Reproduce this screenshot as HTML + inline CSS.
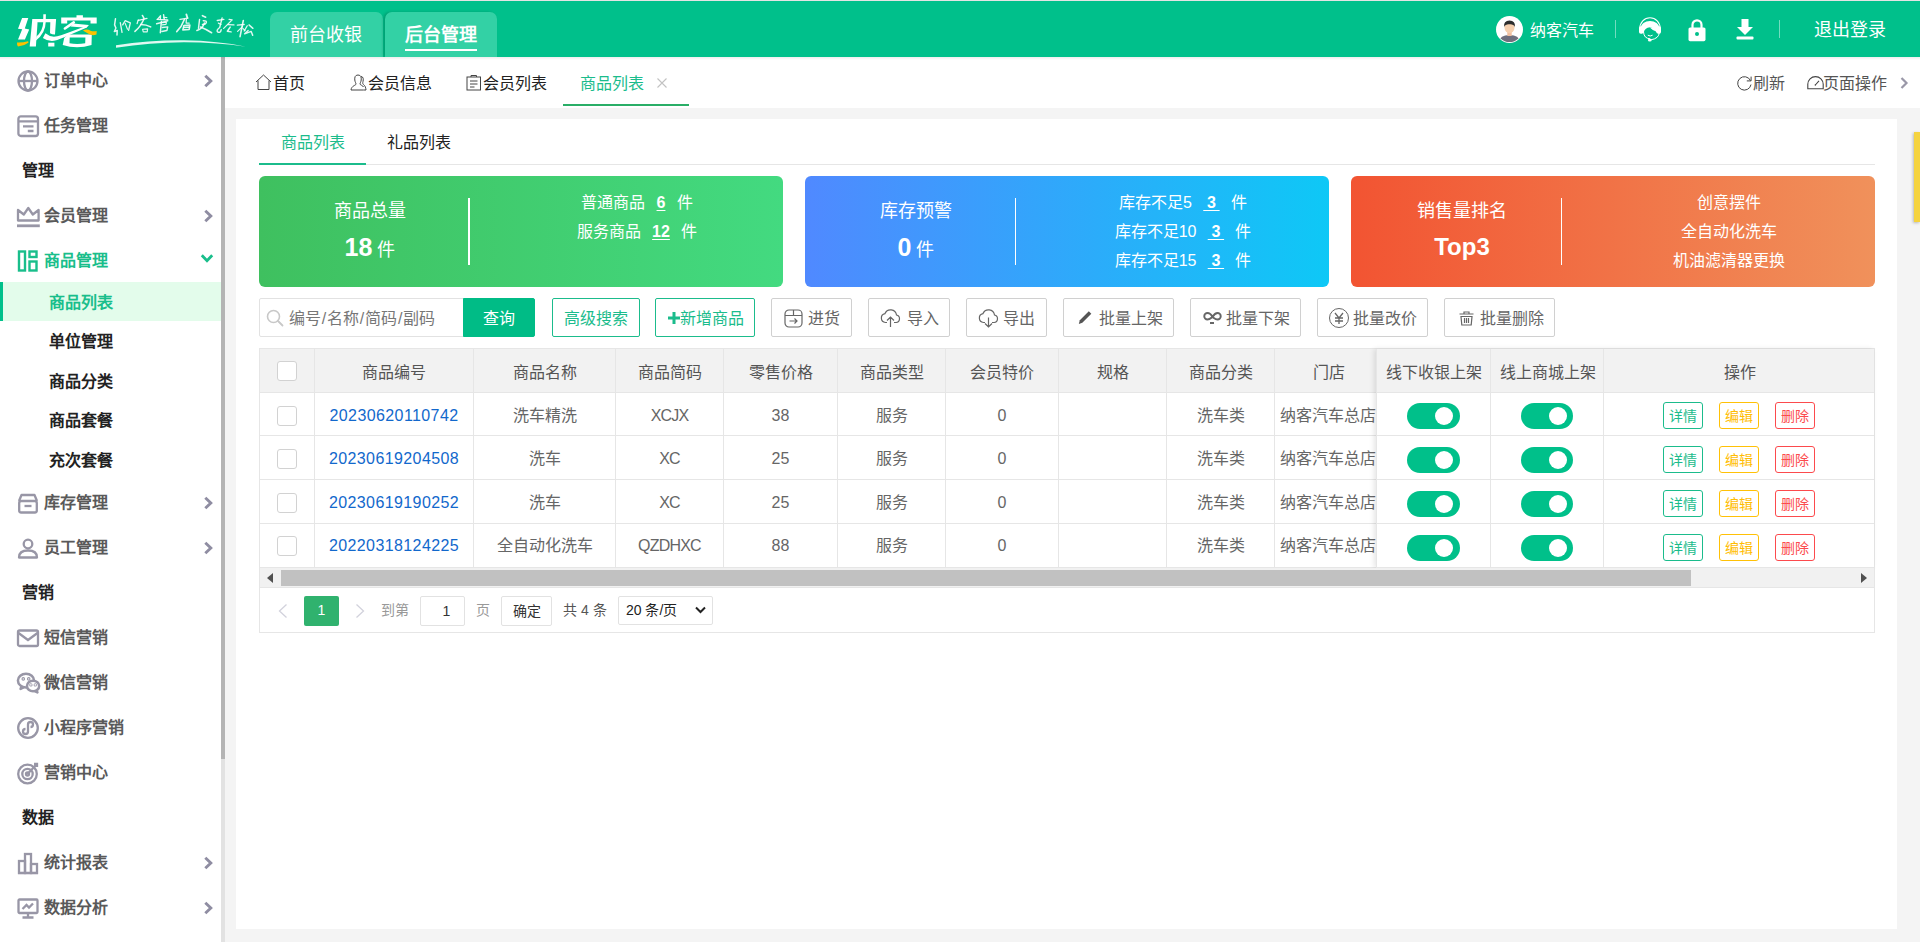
<!DOCTYPE html>
<html lang="zh-CN">
<head>
<meta charset="utf-8">
<title>商品列表</title>
<style>
*{box-sizing:border-box;margin:0;padding:0}
html,body{width:1920px;height:942px;overflow:hidden;background:#f4f4f4;font-family:"Liberation Sans",sans-serif;color:#333;font-size:16px}
.a{position:absolute;white-space:nowrap}
svg{position:absolute;overflow:visible}
/* header */
#hdr{position:absolute;left:0;top:0;width:1920px;height:57px;background:#00c08b;border-top:1px solid #e4e4e4}
.htab{position:absolute;top:12px;height:45px;background:#33d1a5;border-radius:7px 7px 0 0;color:#fff;font-size:18px;line-height:18px;text-align:center}
/* sidebar */
#side{position:absolute;left:0;top:57px;width:221px;height:885px;background:#fff}
#sbar{position:absolute;left:221px;top:57px;width:4px;height:885px;background:#e2e2e2}
#sbar i{position:absolute;left:0;top:0;width:4px;height:702px;background:#b4b4b4}
.nv{position:absolute;left:44px;font-size:16px;line-height:20px;font-weight:bold;color:#595959;white-space:nowrap}
.sec{position:absolute;left:22px;font-size:16px;line-height:20px;font-weight:bold;color:#222;white-space:nowrap}
.sub{position:absolute;left:49px;font-size:16px;line-height:20px;font-weight:bold;color:#222;white-space:nowrap}
.ic{left:17px;width:22px;height:22px;fill:none;stroke:#9896a6;stroke-width:2.300}
.chev{left:204px;width:9px;height:12px;fill:none;stroke:#8f8da2;stroke-width:2.9}
/* tab bar */
#tabs{position:absolute;left:225px;top:57px;width:1695px;height:51px;background:#fff}
.tb{position:absolute;top:74px;font-size:16px;line-height:20px;color:#222;white-space:nowrap}
.ti{fill:none;stroke:#444;stroke-width:1}
#card{position:absolute;left:236px;top:119px;width:1661px;height:810px;background:#fff}
/* stat cards */
.sc{position:absolute;top:176px;width:524px;height:111px;border-radius:6px;color:#fff}
.sc .t{position:absolute;left:0;width:222px;top:24px;text-align:center;font-size:18px;line-height:22px}
.sc .n{position:absolute;left:0;width:222px;top:55.500px;text-align:center;font-size:18px;line-height:30px}
.sc .n b{font-size:25px}
.sc .d{position:absolute;left:209px;top:22px;width:1px;height:67px;background:#fff}
.sc .r{position:absolute;left:232px;width:292px;text-align:center;font-size:16px;line-height:20px;white-space:nowrap;word-spacing:-.7px}
.sc .r u{font-weight:bold;text-underline-offset:2px}
/* toolbar */
.btn{position:absolute;top:298px;height:39px;border:1px solid #d0d0d0;border-radius:2px;background:#fff;color:#666;font-size:16px;line-height:20px}
.btn span{position:absolute;top:10px;white-space:nowrap}
.btn span i{font-style:normal;margin:0 .8px}
.gb{border-color:#1bbc8c;color:#1bbc8c}
.bi{fill:none;stroke:#666;stroke-width:1.2}
/* table */
#tbl{position:absolute;left:259px;top:348px;width:1616px;height:285px;border:1px solid #e6e6e6;background:#fff}
.hl{position:absolute;left:260px;width:1614px;height:1px;background:#e6e6e6}
.vl{position:absolute;top:349px;width:1px;height:219px;background:#e6e6e6}
.th{position:absolute;top:362.500px;font-size:16px;line-height:20px;color:#555;text-align:center;white-space:nowrap}
.td{position:absolute;font-size:16px;line-height:20px;color:#666;text-align:center;white-space:nowrap}
.lk{color:#1268cc;letter-spacing:.4px}
.cb{position:absolute;left:277px;width:20px;height:20px;border:1px solid #d2d2d2;border-radius:3px;background:#fff}
.sw{position:absolute;width:53px;height:26px;border-radius:13px;background:#00c08a}
.sw i{position:absolute;right:7px;top:4px;width:18px;height:18px;border-radius:9px;background:#fff}
.ob{position:absolute;width:40px;height:27px;border:1px solid;border-radius:3px;font-size:14px;line-height:27px;text-align:center;background:#fff}
.og{border-color:#1bbc8c;color:#1bbc8c}.oy{border-color:#ffc107;color:#ffbd05}.or{border-color:#fc4a4d;color:#fc4a4d}
</style>
</head>
<body>

<div id="hdr"></div>
<div class="a" style="left:17px;top:10px;font-size:33px;line-height:40px;font-weight:bold;color:transparent">纳客</div><div class="a" style="left:112px;top:15px;font-size:17px;line-height:24px;letter-spacing:3.400px;color:transparent">纳客营店更轻松</div>
<!-- logo -->
<svg id="logo" style="left:14px;top:10px;width:86px;height:40px" viewBox="14 10 86 40"><g fill="#fff">
<path d="M22.100 18.100 L28.300 18.100 L24.800 28.400 L29.200 29.400 L24.900 39.600 L18 39.600 L22.200 29.300 L18 28.800Z"/>
<path d="M32.300 19.100 L37.800 19.100 L35.900 46.500 L29.700 46.500Z"/>
<path d="M32.300 19.100 H56.100 L55 34.400 Q52 34.400 50 33.200 L50.300 22.300 H37.500Z"/>
<path d="M43.300 14.200 H45.900 L45.700 22.300 Q45.600 33 36 40.500 L36.200 36.800 Q43 31 43.200 22.300Z"/>
<path d="M45.400 33.200 Q49 36.300 54 36.800 Q60 36 70 32 L88.800 24.900 L86.300 27.800 L70 34.800 Q60 39.500 54 40.800 Q47.500 41.500 42.900 38Z"/>
<path d="M48.200 42.700 H54.400 V46.500 H48.200Z"/>
<path d="M76.500 15.300 H82.900 V17.900 H76.500Z M61.200 17.600 H96.700 V23.400 H90.500 V20.600 H67.200 V23.400 H61.200Z"/>
<path d="M73 23.600 L88.800 24.900 L86.300 27.800 L70.500 26.400Z"/>
<path d="M68 34.400 H91.800 L91.500 45 Q77 49.500 62.700 45 L64.200 38Z M69.700 37.600 L69.500 43.300 Q77 44.600 85.200 43.300 L85.400 37.600Z" fill-rule="evenodd"/>
</g><path d="M73.800 22.400 L64.900 28.500" stroke="#fff" stroke-width="2.600" stroke-linecap="round" fill="none"/>
<path d="M17 42.600 Q23 42.800 28 41.200 Q28.800 42 28.300 42.700 Q24 46 18 46.600 Q16.800 45 17 42.600Z M82.900 30.400 Q87 28.600 90.500 30.800 Q93.500 31.800 96.700 31 L96.500 34.600 Q91 36.200 87.100 33 Q85 31.500 82.900 30.400Z" fill="#fcc200"/></svg>
<svg id="slogan" style="left:110px;top:10px;width:160px;height:30px" viewBox="110 10 160 30"><g fill="none" stroke="#fff" stroke-opacity=".88" stroke-linecap="round" stroke-linejoin="round"><path d="M115.469 18.750 L114.594 24.875 L115.906 27.938 L114.375 31.438 L117.219 30.563 L117.000 34.938" stroke-width="1.50"/><path d="M120.281 22.688 L122.031 32.313" stroke-width="1.32"/><path d="M122.688 24.875 L125.094 20.719 L130.344 22.906 L128.594 30.344" stroke-width="1.32"/><path d="M125.094 23.125 L127.500 29.250" stroke-width="1.14"/><path d="M142.375 15.469 L143.906 18.094" stroke-width="1.58"/><path d="M138.219 19.844 L137.125 23.563" stroke-width="1.32"/><path d="M138.438 20.281 L146.969 18.313" stroke-width="1.32"/><path d="M143.906 18.969 Q140.625 26.625 134.938 31.438" stroke-width="1.58"/><path d="M140.844 24.438 Q146.313 24.438 150.688 26.844" stroke-width="1.58"/><path d="M142.594 29.250 L147.625 28.813 L147.188 31.875 L143.250 31.875Z" stroke-width="1.14"/><path d="M157.469 19.406 L160.532 15.688 L160.313 19.406" stroke-width="1.32"/><path d="M157.032 19.406 L167.750 19.975" stroke-width="1.32"/><path d="M163.594 14.594 L164.250 19.406" stroke-width="1.41"/><path d="M163.594 17.219 L166.875 17.656" stroke-width="1.14"/><path d="M156.594 23.781 L167.750 20.938" stroke-width="1.41"/><path d="M161.407 21.375 L160.313 32.750" stroke-width="1.50"/><path d="M162.500 22.688 L166.438 22.250 L166.000 24.438 L162.282 24.875" stroke-width="1.14"/><path d="M162.282 27.500 L167.750 26.844 L166.875 30.563 L161.844 31.438" stroke-width="1.41"/><path d="M186.344 14.375 L187.438 17.875" stroke-width="1.76"/><path d="M180.000 19.406 L187.875 18.094" stroke-width="1.41"/><path d="M184.375 19.406 Q181.750 26.625 176.719 31.656" stroke-width="1.58"/><path d="M186.344 19.406 L186.125 23.125 L189.188 23.125" stroke-width="1.23"/><path d="M183.938 25.531 L189.844 25.094 L189.188 29.469 L182.844 29.906Z" stroke-width="1.58"/><path d="M183.938 27.500 L189.407 27.281" stroke-width="1.41"/><path d="M202.406 15.688 L205.688 17.219" stroke-width="1.58"/><path d="M199.563 19.406 L198.469 28.375" stroke-width="1.41"/><path d="M203.281 20.719 Q207.000 20.500 206.344 22.688 Q205.250 24.875 202.406 24.438" stroke-width="1.41"/><path d="M204.375 23.125 Q202.625 28.813 196.938 30.563" stroke-width="1.58"/><path d="M200.438 27.063 Q206.125 29.250 211.594 32.750" stroke-width="1.58"/><path d="M217.281 20.500 L223.844 19.406" stroke-width="1.41"/><path d="M222.094 17.875 Q220.563 24.438 219.688 27.500 Q216.188 30.125 217.500 31.875 Q220.563 33.625 221.219 29.688" stroke-width="1.41"/><path d="M218.375 23.125 L221.000 24.438" stroke-width="1.23"/><path d="M229.094 19.406 L232.157 19.844 L223.625 28.375" stroke-width="1.32"/><path d="M228.000 24.656 L233.907 24.875" stroke-width="1.41"/><path d="M230.188 27.063 L227.344 31.219 L231.063 31.875" stroke-width="1.50"/><path d="M237.407 25.094 L244.188 24.438" stroke-width="1.41"/><path d="M243.313 20.500 L240.032 36.688" stroke-width="1.58"/><path d="M242.438 26.625 L237.625 31.438" stroke-width="1.23"/><path d="M242.875 28.375 L245.063 30.563" stroke-width="1.14"/><path d="M247.250 25.750 L244.188 31.000" stroke-width="1.32"/><path d="M249.000 24.875 L252.938 28.375" stroke-width="1.41"/><path d="M248.125 30.563 L244.625 33.844 L251.188 31.438 L252.719 35.375" stroke-width="1.41"/></g></svg>
<svg style="left:114px;top:38px;width:136px;height:12px" viewBox="0 0 136 12"><path d="M2 7.300 Q36 2 70 2.300 Q104 2.800 132 8.800 Q104 4.300 70 4.300 Q36 4.500 2 9.800Z" fill="#fff" fill-opacity=".88"/></svg>
<div class="htab" style="left:270px;width:113px"><span class="a" style="left:20px;top:14px">前台收银</span></div>
<div class="htab" style="left:385px;width:112px;box-shadow:-2px 0 3px rgba(0,0,0,.18)"><span class="a" style="left:20px;top:14px;font-weight:bold">后台管理</span><i class="a" style="left:20px;top:37px;width:72px;height:2px;background:#fff"></i></div>
<!-- right -->
<svg style="left:1496px;top:16px;width:27px;height:27px" viewBox="0 0 27 27"><defs><clipPath id="av"><circle cx="13.5" cy="13.5" r="12.6"/></clipPath></defs><circle cx="13.5" cy="13.5" r="13.5" fill="#fff"/><g clip-path="url(#av)"><path d="M3 27 Q3 19 13.5 19 Q24 19 24 27Z" fill="#6f6f7d"/><rect x="11.3" y="15" width="4.4" height="5" fill="#f0bfa0"/><ellipse cx="13.5" cy="11.5" rx="5" ry="5.8" fill="#f6cfae"/><path d="M8 11 Q7.5 4.5 13.5 4.5 Q19.5 4.5 19 11 Q17.5 7.8 13.5 8.2 Q9.5 7.8 8 11Z" fill="#2d2d2d"/></g></svg>
<div class="a" style="left:1530px;top:21px;font-size:16px;line-height:20px;color:#fff">纳客汽车</div>
<i class="a" style="left:1615px;top:20px;width:1px;height:18px;background:rgba(255,255,255,.45)"></i>
<svg style="left:1638px;top:17px;width:24px;height:25px" viewBox="0 0 24 25"><path d="M1.800 11.500 A10.200 10.700 0 0 1 22.200 11.500" fill="none" stroke="#fff" stroke-width="1.100"/><ellipse cx="12" cy="10.800" rx="9.300" ry="6.800" fill="#fff"/><rect x="1" y="9.300" width="4.500" height="7.400" rx="1.800" fill="#fff"/><rect x="18.500" y="9.300" width="4.500" height="7.400" rx="1.800" fill="#fff"/><ellipse cx="12" cy="15.800" rx="6.200" ry="5.500" fill="#00c08b"/><path d="M11.500 10.300 Q14.500 11.300 15.500 8.800 Q17.800 11.500 18.200 14.500 Q14.500 13.500 11.500 10.300Z" fill="#fff"/><path d="M5.500 15 Q6 21.500 12 21.800 M9.800 18.200 Q12.200 19.800 14.600 18.200" fill="none" stroke="#fff" stroke-width="1"/><path d="M21.300 15.500 Q21 21.500 13 22.800" fill="none" stroke="#fff" stroke-width="1"/><ellipse cx="11.800" cy="23" rx="1.900" ry="1.500" fill="#fff"/></svg>
<svg style="left:1688px;top:18px;width:18px;height:24px" viewBox="0 0 18 24"><path d="M4.5 10 V6.800 A4.500 4.500 0 0 1 13.500 6.800 V10" fill="none" stroke="#fff" stroke-width="2.200"/><rect x="0.500" y="9.500" width="17" height="13.700" rx="1.600" fill="#fff"/><circle cx="9" cy="16" r="2" fill="#00c08b"/></svg>
<svg style="left:1736px;top:18px;width:18px;height:22px" viewBox="0 0 18 22"><path d="M5.500 1 H12.500 V9 H17 L9 17 L1 9 H5.500Z" fill="#fff"/><rect x="0.500" y="18.600" width="17" height="3" rx="1" fill="#fff"/></svg>
<i class="a" style="left:1779px;top:20px;width:1px;height:18px;background:rgba(255,255,255,.45)"></i>
<div class="a" style="left:1814px;top:19px;font-size:18px;line-height:22px;color:#fff">退出登录</div>

<div id="side"></div><div id="sbar"><i></i></div>
<svg class="ic" style="top:70px" viewBox="0 0 22 22"><circle cx="11" cy="11" r="9.500"/><ellipse cx="11" cy="11" rx="4" ry="9.500"/><path d="M1.500 11 H20.500"/></svg><div class="nv" style="top:71px">订单中心</div><svg class="chev" style="top:75px" viewBox="0 0 9 12"><path d="M1.300 .8 L6.800 6 L1.300 11.200"/></svg>
<svg class="ic" style="top:115px" viewBox="0 0 22 22"><rect x="1.400" y="1.400" width="19.600" height="19.600" rx="2.500"/><path d="M1.400 6.300 H21 M6 11.300 H16.500 M10.800 16 H16.500"/></svg><div class="nv" style="top:116px">任务管理</div>
<div class="sec" style="top:161px">管理</div>
<svg class="ic" style="top:205px" viewBox="0 0 22 22"><path d="M1 15.500 V5 L6.800 9.500 L11.300 3 L15.800 9.500 L21.600 5 V15.500Z" stroke-linejoin="round"/><path d="M0 20.800 H22.800" stroke-width="2.800"/></svg><div class="nv" style="top:206px">会员管理</div><svg class="chev" style="top:210px" viewBox="0 0 9 12"><path d="M1.300 .8 L6.800 6 L1.300 11.200"/></svg>
<svg class="ic" style="top:492px" viewBox="0 0 22 22"><path d="M2 9 L4.500 3 H17.500 L20 9" stroke-linejoin="round"/><rect x="2.200" y="9" width="17.600" height="11.500" rx="2"/><path d="M7.500 14 H14.500"/></svg><div class="nv" style="top:493px">库存管理</div><svg class="chev" style="top:497px" viewBox="0 0 9 12"><path d="M1.300 .8 L6.800 6 L1.300 11.200"/></svg>
<svg class="ic" style="top:537px" viewBox="0 0 22 22"><circle cx="11" cy="7" r="4.300"/><path d="M2 20.500 Q2 13.500 11 13.500 Q20 13.500 20 20.500Z" stroke-linejoin="round"/></svg><div class="nv" style="top:538px">员工管理</div><svg class="chev" style="top:542px" viewBox="0 0 9 12"><path d="M1.300 .8 L6.800 6 L1.300 11.200"/></svg>
<div class="sec" style="top:583px">营销</div>
<svg class="ic" style="top:627px" viewBox="0 0 22 22"><rect x="1" y="3.500" width="20" height="15.500" rx="1.500"/><path d="M1.500 6 L11 13 L20.500 6"/></svg><div class="nv" style="top:628px">短信营销</div>
<svg class="ic" style="top:672px" viewBox="0 0 22 22"><g transform="translate(-.6 -1.600) scale(1.090)"><ellipse cx="8.800" cy="9.300" rx="7.400" ry="6.300"/><path d="M4.800 14.500 L3.800 17 L7 15.300" stroke-linejoin="round"/><ellipse cx="15.300" cy="14.300" rx="5.600" ry="4.800" fill="#fff"/><path d="M18.300 18.300 L19.300 20.200 L16.800 19" stroke-linejoin="round"/><circle cx="13.300" cy="13.300" r=".4"/><circle cx="17.300" cy="13.300" r=".4"/><circle cx="6.300" cy="7.800" r=".5"/><circle cx="11.300" cy="7.800" r=".5"/></g></svg><div class="nv" style="top:673px">微信营销</div>
<svg class="ic" style="top:717px" viewBox="0 0 22 22"><circle cx="11" cy="11" r="9.800"/><path d="M11 7.500 V14.500 A2.500 2.500 0 1 1 8.500 12 M11 7.500 A2.500 2.500 0 1 1 13.500 10"/></svg><div class="nv" style="top:718px">小程序营销</div>
<svg class="ic" style="top:762px" viewBox="0 0 22 22"><circle cx="10.500" cy="12" r="9.300"/><circle cx="10.500" cy="12" r="5.200"/><circle cx="10.500" cy="12" r="1.500"/><path d="M10.500 12 L19.500 2.500 M17 2 H20 V5"/></svg><div class="nv" style="top:763px">营销中心</div>
<div class="sec" style="top:808px">数据</div>
<svg class="ic" style="top:852px" viewBox="0 0 22 22"><rect x="2" y="9" width="6" height="12"/><rect x="8" y="2" width="6" height="19"/><rect x="14" y="12" width="6" height="9"/><path d="M1 21 H21"/></svg><div class="nv" style="top:853px">统计报表</div><svg class="chev" style="top:857px" viewBox="0 0 9 12"><path d="M1.300 .8 L6.800 6 L1.300 11.200"/></svg>
<svg class="ic" style="top:897px" viewBox="0 0 22 22"><rect x="1.500" y="2.500" width="19" height="13.500" rx="1"/><path d="M11 16 V20.500 M5.500 20.500 H16.500 M5.500 12 L9.500 8 L12 10.500 L16 6.500"/></svg><div class="nv" style="top:898px">数据分析</div><svg class="chev" style="top:902px" viewBox="0 0 9 12"><path d="M1.300 .8 L6.800 6 L1.300 11.200"/></svg>
<svg class="ic" style="top:250px;stroke:#19be8b;stroke-width:2.400" viewBox="0 0 22 22"><rect x="2" y="1.500" width="6" height="19"/><rect x="12.500" y="1.500" width="7" height="5.500"/><rect x="12.500" y="11.500" width="7" height="9"/></svg><div class="nv" style="top:251px;color:#19be8b">商品管理</div><svg class="chev" style="left:201px;top:254px;width:12px;height:9px;stroke:#19be8b;stroke-width:2.800" viewBox="0 0 12 9"><path d="M.8 1.300 L6 6.800 L11.200 1.300"/></svg>
<div class="a" style="left:0;top:282px;width:221px;height:39px;background:#e3fceb"></div><div class="a" style="left:0;top:282px;width:3px;height:39px;background:#00c08b"></div>
<div class="sub" style="top:293px;color:#19be8b">商品列表</div>
<div class="sub" style="top:332px">单位管理</div>
<div class="sub" style="top:372px">商品分类</div>
<div class="sub" style="top:411px">商品套餐</div>
<div class="sub" style="top:451px">充次套餐</div>

<div id="tabs"></div><div class="a" style="left:0;top:57px;width:1920px;height:3px;background:linear-gradient(rgba(0,0,0,.07),rgba(0,0,0,0))"></div>
<svg class="ti" style="left:255px;top:74px;width:17px;height:17px" viewBox="0 0 17 17"><path d="M1 8 L8.500 1 L16 8 M3 6.500 V15.500 H14 V6.500"/></svg>
<div class="tb" style="left:273px">首页</div>
<svg class="ti" style="left:350px;top:74px;width:17px;height:17px" viewBox="0 0 17 17"><path d="M8 1 C5 1 4.500 3.500 4.800 6 C5 8 6 9 6 10 C6 11.500 1.500 11.500 1 16 H13.500 M8 1 C11 1 11.500 3.500 11.200 6 C11 8 10 9 10 10 C10 11 13 11.500 13.500 13 M11 2.500 C13.500 2.500 13.500 5.500 13 7.500 C12.800 8.500 12.500 9 13 10 C13.500 11 15.500 11 16 16 H13.500"/></svg>
<div class="tb" style="left:368px">会员信息</div>
<svg class="ti" style="left:466px;top:74px;width:16px;height:17px" viewBox="0 0 16 17"><rect x="1" y="3" width="13.500" height="13" /><path d="M5 3 V1.500 H10.500 V3 M4 7 H11.500 M4 10 H11.500 M4 13 H8.500"/></svg>
<div class="tb" style="left:483px">会员列表</div>
<div class="tb" style="left:580px;color:#1bbc8c">商品列表</div>
<svg style="left:657px;top:78px;width:10px;height:10px" viewBox="0 0 10 10"><path d="M.5 .5 L9.500 9.500 M9.500 .5 L.5 9.500" stroke="#c2c2c2" stroke-width="1.100" fill="none"/></svg>
<i class="a" style="left:563px;top:104px;width:126px;height:2px;background:#2aae67"></i>
<svg class="ti" style="left:1737.300px;top:75.500px;width:15px;height:15px" viewBox="0 0 15 15"><path d="M13.470 4.570 A6.700 6.700 0 1 0 14 8.560 M9.800 4.900 H14.100 V.6"/></svg>
<div class="tb" style="left:1753px;color:#555">刷新</div>
<svg class="ti" style="left:1807px;top:76px;width:17px;height:14px" viewBox="0 0 17 14"><path d="M.8 12.700 V8.300 A7.700 7.700 0 0 1 16.200 8.300 V12.700Z M8.300 9 L12 4.800" stroke-width="1.100"/><circle cx="8.300" cy="9" r=".7" fill="#444" stroke="none"/></svg>
<div class="tb" style="left:1823px;color:#555">页面操作</div>
<svg style="left:1900px;top:77px;width:8px;height:12px" viewBox="0 0 8 12"><path d="M1.500 1 L6.500 6 L1.500 11" fill="none" stroke="#9a98a8" stroke-width="2.200"/></svg>

<div id="card"></div>
<div class="a" style="left:1914px;top:132px;width:6px;height:90px;background:#f5d33f;box-shadow:-1px 1px 3px rgba(0,0,0,.25)"></div>
<div class="a" style="left:281px;top:133.400px;font-size:16px;line-height:20px;color:#1bbc8c">商品列表</div><div class="a" style="left:387px;top:133.400px;font-size:16px;line-height:20px;color:#222">礼品列表</div>
<i class="a" style="left:259px;top:164px;width:1616px;height:1px;background:#e6e6e6"></i><i class="a" style="left:259px;top:163px;width:107px;height:2px;background:#1bbc8c"></i>
<div class="sc" style="left:259px;background:linear-gradient(90deg,#3fc05f,#43da80)"><div class="t">商品总量</div><div class="n"><b>18</b> 件</div><div class="d" style="width:2px"></div><div class="r" style="top:17px">普通商品&nbsp;&nbsp;&nbsp;<u>6</u>&nbsp;&nbsp;&nbsp;件</div><div class="r" style="top:46px">服务商品&nbsp;&nbsp;&nbsp;<u>12</u>&nbsp;&nbsp;&nbsp;件</div></div>
<div class="sc" style="left:805px;background:linear-gradient(90deg,#5089ff,#0ec8f6)"><div class="t">库存预警</div><div class="n"><b>0</b> 件</div><div class="d" style="left:210px"></div><div class="r" style="top:17px">库存不足5&nbsp;&nbsp;&nbsp;<u>&nbsp;3&nbsp;</u>&nbsp;&nbsp;&nbsp;件</div><div class="r" style="top:46px">库存不足10&nbsp;&nbsp;&nbsp;<u>&nbsp;3&nbsp;</u>&nbsp;&nbsp;&nbsp;件</div><div class="r" style="top:75px">库存不足15&nbsp;&nbsp;&nbsp;<u>&nbsp;3&nbsp;</u>&nbsp;&nbsp;&nbsp;件</div></div>
<div class="sc" style="left:1351px;background:linear-gradient(90deg,#f25432,#f0915b)"><div class="t">销售量排名</div><div class="n"><b style="font-size:24px">Top3</b></div><div class="d" style="left:210px"></div><div class="r" style="top:17px">创意摆件</div><div class="r" style="top:46px">全自动化洗车</div><div class="r" style="top:75px">机油滤清器更换</div></div>
<div class="btn" style="left:259px;width:205px;border-color:#e2e2e2;border-radius:2px 0 0 2px"><svg style="left:6px;top:10px;width:18px;height:18px" viewBox="0 0 18 18"><circle cx="7.500" cy="7.500" r="6" fill="none" stroke="#c8c8c8" stroke-width="1.600"/><path d="M12 12 L16.500 16.500" stroke="#c8c8c8" stroke-width="1.800" stroke-linecap="round"/></svg><span style="left:29px;color:#777">编号<i>/</i>名称<i>/</i>简码<i>/</i>副码</span></div>
<div class="btn" style="left:463px;width:72px;background:#00bc86;border-color:#00bc86;color:#fff;border-radius:0 2px 2px 0"><span style="left:19px">查询</span></div>
<div class="btn gb" style="left:552px;width:88px"><span style="left:11px">高级搜索</span></div>
<div class="btn gb" style="left:655px;width:100px"><svg style="left:12px;top:13px;width:12px;height:12px" viewBox="0 0 12 12"><path d="M6 0 V12 M0 6 H12" stroke="#1bbc8c" stroke-width="3"/></svg><span style="left:23.500px">新增商品</span></div>
<div class="btn" style="left:771px;width:81px"><svg class="bi" style="left:12px;top:10px;width:19px;height:19px" viewBox="0 0 19 19"><rect x="1" y="1" width="17" height="17" rx="4"/><path d="M1 6.500 H18 M9.500 1 V6.500 M5.500 12 H13 M10.500 9.500 L13 12 L10.500 14.500"/></svg><span style="left:36px">进货</span></div>
<div class="btn" style="left:868px;width:82px"><svg class="bi" style="left:11px;top:10px;width:21px;height:19px" viewBox="0 0 21 19"><path d="M7 13.500 H5.500 A4.500 4.500 0 0 1 5 4.600 A6 6 0 0 1 16.500 6 A3.800 3.800 0 0 1 16 13.500 H14 M10.500 18 V8.500 M7 11.500 L10.500 8 L14 11.500"/></svg><span style="left:38px">导入</span></div>
<div class="btn" style="left:966px;width:81px"><svg class="bi" style="left:11px;top:10px;width:21px;height:19px" viewBox="0 0 21 19"><path d="M7 13.500 H5.500 A4.500 4.500 0 0 1 5 4.600 A6 6 0 0 1 16.500 6 A3.800 3.800 0 0 1 16 13.500 H14 M10.500 8.500 V18 M7 14.500 L10.500 18 L14 14.500"/></svg><span style="left:36px">导出</span></div>
<div class="btn" style="left:1063px;width:111px"><svg style="left:14px;top:11px;width:15px;height:15px" viewBox="0 0 15 15"><path d="M.8 14 L1.800 10.300 L10.800 1.300 L13.300 3.800 L4.300 12.800Z" fill="#555"/></svg><span style="left:35px">批量上架</span></div>
<div class="btn" style="left:1190px;width:111px"><svg class="bi" style="left:12px;top:12px;width:19px;height:14px;stroke-width:1.900" viewBox="0 0 19 14"><path d="M9.500 6 C8 3 6 2 4.500 2 A3.200 3.200 0 0 0 4.500 8.500 C7 8.500 8 7 9.500 6 C11 3.500 13 2 14.500 2 A3.200 3.200 0 0 1 14.500 8.500 C12.500 8.500 11 7 9.500 6 M7 12 H11"/></svg><span style="left:35px">批量下架</span></div>
<div class="btn" style="left:1317px;width:111px"><svg class="bi" style="left:11px;top:9px;width:20px;height:20px;stroke-width:1" viewBox="0 0 20 20"><circle cx="10" cy="10" r="9.500"/><path d="M6 5 L10 10 L14 5 M10 10 V16 M6 10 H14 M6 13 H14" stroke-width="1.300"/></svg><span style="left:35px">批量改价</span></div>
<div class="btn" style="left:1444px;width:111px"><svg class="bi" style="left:14px;top:12px;width:15px;height:15px" viewBox="0 0 15 15"><path d="M.5 3 H14.500 M5 3 V1 H10 V3 M2 5.500 L2.800 14 H12.200 L13 5.500Z M5.500 7 V12 M7.500 7 V12 M9.500 7 V12"/></svg><span style="left:35px">批量删除</span></div>
<div id="tbl"></div><div class="a" style="left:260px;top:349px;width:1614px;height:43px;background:#f2f2f2"></div>
<i class="hl" style="top:392px"></i><i class="hl" style="top:435px"></i><i class="hl" style="top:479px"></i><i class="hl" style="top:523px"></i><i class="hl" style="top:567px"></i><i class="vl" style="left:314px"></i><i class="vl" style="left:473px"></i><i class="vl" style="left:615px"></i><i class="vl" style="left:723px"></i><i class="vl" style="left:837px"></i><i class="vl" style="left:945px"></i><i class="vl" style="left:1058px"></i><i class="vl" style="left:1166px"></i><i class="vl" style="left:1274px"></i><div class="th" style="left:315px;width:158px">商品编号</div><div class="th" style="left:474px;width:141px">商品名称</div><div class="th" style="left:616px;width:107px">商品简码</div><div class="th" style="left:724px;width:113px">零售价格</div><div class="th" style="left:838px;width:107px">商品类型</div><div class="th" style="left:946px;width:112px">会员特价</div><div class="th" style="left:1059px;width:107px">规格</div><div class="th" style="left:1167px;width:107px">商品分类</div><div class="th" style="left:1275px;width:107px">门店</div><div class="cb" style="top:361px"></div>
<div class="cb" style="top:405.5px"></div><div class="td" style="left:315px;width:158px;top:405.5px"><span class="lk">20230620110742</span></div><div class="td" style="left:474px;width:141px;top:405.5px">洗车精洗</div><div class="td" style="left:616px;width:107px;top:405.5px;letter-spacing:-.8px">XCJX</div><div class="td" style="left:724px;width:113px;top:405.5px">38</div><div class="td" style="left:838px;width:107px;top:405.5px">服务</div><div class="td" style="left:946px;width:112px;top:405.5px">0</div><div class="td" style="left:1167px;width:107px;top:405.5px">洗车类</div><div class="td" style="left:1280.400px;top:405.5px">纳客汽车总店</div><div class="cb" style="top:449.4px"></div><div class="td" style="left:315px;width:158px;top:449.4px"><span class="lk">20230619204508</span></div><div class="td" style="left:474px;width:141px;top:449.4px">洗车</div><div class="td" style="left:616px;width:107px;top:449.4px;letter-spacing:-.8px">XC</div><div class="td" style="left:724px;width:113px;top:449.4px">25</div><div class="td" style="left:838px;width:107px;top:449.4px">服务</div><div class="td" style="left:946px;width:112px;top:449.4px">0</div><div class="td" style="left:1167px;width:107px;top:449.4px">洗车类</div><div class="td" style="left:1280.400px;top:449.4px">纳客汽车总店</div><div class="cb" style="top:493.2px"></div><div class="td" style="left:315px;width:158px;top:493.2px"><span class="lk">20230619190252</span></div><div class="td" style="left:474px;width:141px;top:493.2px">洗车</div><div class="td" style="left:616px;width:107px;top:493.2px;letter-spacing:-.8px">XC</div><div class="td" style="left:724px;width:113px;top:493.2px">25</div><div class="td" style="left:838px;width:107px;top:493.2px">服务</div><div class="td" style="left:946px;width:112px;top:493.2px">0</div><div class="td" style="left:1167px;width:107px;top:493.2px">洗车类</div><div class="td" style="left:1280.400px;top:493.2px">纳客汽车总店</div><div class="cb" style="top:536.4px"></div><div class="td" style="left:315px;width:158px;top:536.4px"><span class="lk">20220318124225</span></div><div class="td" style="left:474px;width:141px;top:536.4px">全自动化洗车</div><div class="td" style="left:616px;width:107px;top:536.4px;letter-spacing:-.8px">QZDHXC</div><div class="td" style="left:724px;width:113px;top:536.4px">88</div><div class="td" style="left:838px;width:107px;top:536.4px">服务</div><div class="td" style="left:946px;width:112px;top:536.4px">0</div><div class="td" style="left:1167px;width:107px;top:536.4px">洗车类</div><div class="td" style="left:1280.400px;top:536.4px">纳客汽车总店</div>
<div class="a" style="left:1376px;top:349px;width:498px;height:219px;background:#fff;box-shadow:-2px 0 5px rgba(0,0,0,.10)"></div><div class="a" style="left:1376px;top:349px;width:498px;height:43px;background:#f2f2f2"></div><i class="hl" style="left:1376px;width:498px;top:392px"></i><i class="hl" style="left:1376px;width:498px;top:435px"></i><i class="hl" style="left:1376px;width:498px;top:479px"></i><i class="hl" style="left:1376px;width:498px;top:523px"></i><i class="hl" style="left:1376px;width:498px;top:567px"></i><i class="vl" style="left:1376px"></i><i class="vl" style="left:1490px"></i><i class="vl" style="left:1603px"></i><div class="th" style="left:1377px;width:114px">线下收银上架</div><div class="th" style="left:1491px;width:113px">线上商城上架</div><div class="th" style="left:1604px;width:271px">操作</div><div class="sw" style="left:1407px;top:403px"><i></i></div><div class="sw" style="left:1521px;width:52px;top:403px"><i style="right:6px"></i></div><div class="ob og" style="left:1663px;top:402.3px">详情</div><div class="ob oy" style="left:1719px;top:402.3px">编辑</div><div class="ob or" style="left:1775px;top:402.3px">删除</div>
<div class="sw" style="left:1407px;top:446.6px"><i></i></div><div class="sw" style="left:1521px;width:52px;top:446.6px"><i style="right:6px"></i></div><div class="ob og" style="left:1663px;top:446.3px">详情</div><div class="ob oy" style="left:1719px;top:446.3px">编辑</div><div class="ob or" style="left:1775px;top:446.3px">删除</div>
<div class="sw" style="left:1407px;top:490.6px"><i></i></div><div class="sw" style="left:1521px;width:52px;top:490.6px"><i style="right:6px"></i></div><div class="ob og" style="left:1663px;top:490.3px">详情</div><div class="ob oy" style="left:1719px;top:490.3px">编辑</div><div class="ob or" style="left:1775px;top:490.3px">删除</div>
<div class="sw" style="left:1407px;top:534.6px"><i></i></div><div class="sw" style="left:1521px;width:52px;top:534.6px"><i style="right:6px"></i></div><div class="ob og" style="left:1663px;top:534.3px">详情</div><div class="ob oy" style="left:1719px;top:534.3px">编辑</div><div class="ob or" style="left:1775px;top:534.3px">删除</div>
<div class="a" style="left:260px;top:568px;width:1614px;height:19px;background:#f1f1f1"></div>
<div class="a" style="left:281px;top:570px;width:1410px;height:16px;background:#c1c1c1"></div>
<svg style="left:267px;top:573px;width:6px;height:10px" viewBox="0 0 6 10"><path d="M6 0 V10 L0 5Z" fill="#505050"/></svg>
<svg style="left:1861px;top:573px;width:6px;height:10px" viewBox="0 0 6 10"><path d="M0 0 V10 L6 5Z" fill="#505050"/></svg>
<i class="hl" style="top:587px"></i>
<svg style="left:278px;top:604px;width:10px;height:14px" viewBox="0 0 10 14"><path d="M8.500 .5 L1.500 7 L8.500 13.500" fill="none" stroke="#d2d2dc" stroke-width="1.300"/></svg>
<div class="a" style="left:304px;top:596px;width:35px;height:30px;background:#30b26e;border-radius:2px;color:#fff;font-size:14px;line-height:28px;text-align:center">1</div>
<svg style="left:355px;top:604px;width:10px;height:14px" viewBox="0 0 10 14"><path d="M1.500 .5 L8.500 7 L1.500 13.500" fill="none" stroke="#d2d2dc" stroke-width="1.300"/></svg>
<div class="a" style="left:381px;top:601px;font-size:14px;line-height:18px;color:#999">到第</div>
<div class="a" style="left:420px;top:596px;width:45px;height:30px;border:1px solid #e2e2e2;border-radius:2px;font-size:14px;line-height:28px;text-align:center;color:#333;padding-left:8px">1</div>
<div class="a" style="left:476px;top:601px;font-size:14px;line-height:18px;color:#999">页</div>
<div class="a" style="left:501px;top:596px;width:51px;height:30px;border:1px solid #e2e2e2;border-radius:2px;font-size:14px;line-height:28px;text-align:center;color:#333">确定</div>
<div class="a" style="left:563px;top:601px;font-size:14px;line-height:18px;color:#555">共 4 条</div>
<div class="a" style="left:618px;top:596px;width:95px;height:29px;border:1px solid #e2e2e2;border-radius:2px;font-size:14px;line-height:27px;color:#222;padding-left:7px">20 条/页</div>
<svg style="left:695px;top:606px;width:11px;height:8px" viewBox="0 0 11 8"><path d="M1 1.500 L5.500 6 L10 1.500" fill="none" stroke="#222" stroke-width="2"/></svg>

</body>
</html>
